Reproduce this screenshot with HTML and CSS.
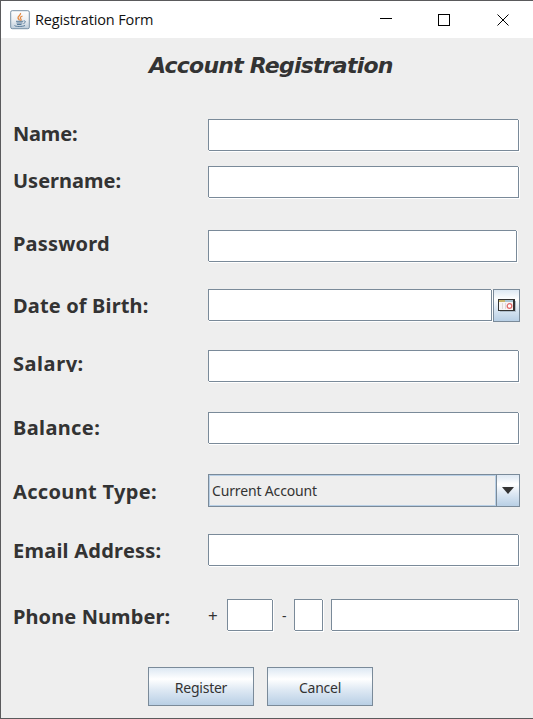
FILE: index.html
```
<!DOCTYPE html>
<html lang="en">
<head>
<meta charset="utf-8">
<title>Registration Form</title>
<link rel="stylesheet" href="styles.css">
</head>
<body>
<div class="window">
  <header class="titlebar">
    <svg class="app-icon" width="20" height="20" viewBox="0 0 20 20" fill="none">
      <defs><linearGradient id="tile" x1="0" y1="0" x2="0" y2="1"><stop offset="0" stop-color="#fff"/><stop offset=".5" stop-color="#edf0f3"/><stop offset="1" stop-color="#bdccda"/></linearGradient></defs>
      <rect x=".7" y=".7" width="18.6" height="18" rx="1.5" fill="url(#tile)" stroke="#7890a5"/>
      <path d="M10.5 3c1 2-3 3.200-2.500 5 .2 1 1.500 1.500 1.500 2.500M12.500 6c-2 .8-3 1.700-1.500 3.200.5.700 0 1.300-.5 1.800" stroke="#e58b45" stroke-width="1.300"/>
      <path d="M6 11.300h7M6.500 13h6M7 14.500h4.500M13.500 11c2.500-.5 2.500 1.500 0 2.500M4.500 15.500c1 1.300 8 1.300 10.500 0" stroke="#587b99" stroke-width="1"/>
    </svg>
    <span class="title">Registration Form</span>
    <svg class="controls" width="130" height="14" viewBox="0 0 130 14" fill="none" stroke="#000" shape-rendering="crispEdges">
      <path d="M0 5.500h12M58.500 1.500h11v11h-11z"/>
      <path d="M117.500 1.500l11 11M128.500 1.500l-11 11" shape-rendering="auto"/>
    </svg>
  </header>
  <main class="form">
    <h1>Account Registration</h1>
    <div class="row name"><label><span>Name:</span></label><div class="field"></div></div>
    <div class="row username"><label><span>Username:</span></label><div class="field"></div></div>
    <div class="row password"><label><span>Password</span></label><div class="field"></div></div>
    <div class="row birth"><label><span>Date of Birth:</span></label>
      <div class="date">
        <div class="field"></div>
        <div class="date-button">
          <svg width="18" height="15" viewBox="0 0 18 15" shape-rendering="crispEdges">
            <path d="M2 13.500h15.500V3" fill="none" stroke="#aebdcb"/>
            <path d="M0 1h17v12H0z" fill="#333"/><path d="M1 4h14v8H1z" fill="#f8f5f5"/>
            <path d="M1 2h6v2H1z" fill="#c8b56a"/><path d="M7 2h8v2H7z" fill="#a9c5d3"/>
            <path d="M4.500 5v6M7.500 5v6" stroke="#dedada"/>
            <circle cx="11.500" cy="8" r="2.300" fill="#fff" stroke="#e16b6b" stroke-width="1.300" shape-rendering="auto"/>
          </svg>
        </div>
      </div>
    </div>
    <div class="row salary"><label><span>Salary:</span></label><div class="field"></div></div>
    <div class="row balance"><label><span>Balance:</span></label><div class="field"></div></div>
    <div class="row type"><label><span>Account Type:</span></label>
      <div class="combo"><div class="value"><span>Current Account</span></div><div class="arrow"><svg width="12" height="7" viewBox="0 0 12 7"><path d="M0 0h12L6 7z" fill="#333"/></svg></div></div>
    </div>
    <div class="row email"><label><span>Email Address:</span></label><div class="field"></div></div>
    <div class="row phone"><label><span>Phone Number:</span></label>
      <div class="phone-parts"><span class="sign plus">+</span><div class="field country"></div><span class="sign dash">-</span><div class="field area"></div><div class="field number"></div></div>
    </div>
    <div class="actions"><button class="register"><span>Register</span></button><button class="cancel"><span>Cancel</span></button></div>
  </main>
</div>
</body>
</html>
```

FILE: styles.css
```
* { box-sizing: border-box; }
body { margin: 0; background: #eee; color: #333; font-family: "Noto Sans", "Open Sans", sans-serif; }
.window { width: 533px; height: 719px; overflow: hidden; border: solid #5a5a5c; border-width: 1px 0 1px 1px; background: #eee; }
.titlebar { height: 37px; background: #fff; display: flex; align-items: center; padding: 0 23px 0 9px; color: #111; }
.title { font: 14.5px/20px "Open Sans", sans-serif; letter-spacing: -.13px; margin-left: 5px; white-space: nowrap; }
.controls { margin-left: auto; }
.form { display: flex; flex-direction: column; }
h1 { margin: 0; height: 81px; padding: 12px 0 0 148px; font: italic bold 22px/32px "DejaVu Sans", sans-serif; letter-spacing: -.78px; white-space: nowrap; }
.row { display: grid; grid-template-columns: 195px 312px; height: 33px; padding-left: 12px; flex: none; box-sizing: content-box; }
label { font-size: 20px; line-height: 28px; font-weight: bold; white-space: nowrap; }
label span { display: block; }
.field { position: relative; width: 311px; height: 32px; border: 1px solid #7a8a99; background: #fff; box-shadow: 1px 1px #fff; }
.field::before, .field::after { content: ""; position: absolute; width: 1px; height: 1px; background: #eee; }
.field::before { left: -1px; bottom: -1px; }
.field::after { right: -1px; top: -1px; }
.name label, .username label { padding-top: 1px; }
.name label { letter-spacing: -.2px; }
.username { margin-top: 14px; }
.password { margin-top: 31px; }
.password label { letter-spacing: .2px; }
.password .field { width: 309px; }
.birth { margin-top: 26px; }
.birth label { padding-top: 3px; letter-spacing: .15px; }
.salary { margin-top: 28px; }
.salary label { height: 22px; overflow: hidden; letter-spacing: .55px; }
.balance { margin-top: 29px; }
.balance label { padding-top: 2px; letter-spacing: .38px; }
.type { margin-top: 29px; }
.type label { padding-top: 4px; letter-spacing: .33px; }
.email { margin-top: 27px; }
.email label { padding-top: 3px; letter-spacing: .24px; }
.phone { margin-top: 32px; }
.phone label { padding-top: 4px; letter-spacing: .1px; }
.date { display: flex; justify-content: space-between; width: 312px; }
.date .field { width: 284px; }
.date-button { width: 27px; height: 33px; display: flex; align-items: center; justify-content: center; }
.date-button, .arrow, button { border: 1px solid #7a8a99; background: linear-gradient(#dde8f3 0%, #fff 30%, #dde8f3 60%, #b8cfe5 100%); }
.combo { display: flex; height: 33px; border: 1px solid #7a8a99; font-size: 14px; letter-spacing: -.15px; }
.value { flex: 1; border: 1px solid #b8cfe5; padding-left: 2px; line-height: 30px; }
.arrow { width: 23px; border-width: 0 0 0 1px; display: flex; align-items: center; justify-content: center; }
.phone-parts { display: flex; width: 312px; font-size: 14px; line-height: 33px; }
.sign { width: 19px; }
.plus { font-size: 17px; }
.dash { width: 21px; padding-left: 9px; }
.country { width: 46px; }
.area { width: 29px; margin-right: 8px; }
.number { width: 188px; }
.actions { display: flex; gap: 13px; margin-top: 35px; padding-left: 147px; }
button { width: 106px; height: 39px; padding: 3px 0 0; color: #333; font: 14px/30px "Noto Sans", sans-serif; letter-spacing: -.25px; }
```
